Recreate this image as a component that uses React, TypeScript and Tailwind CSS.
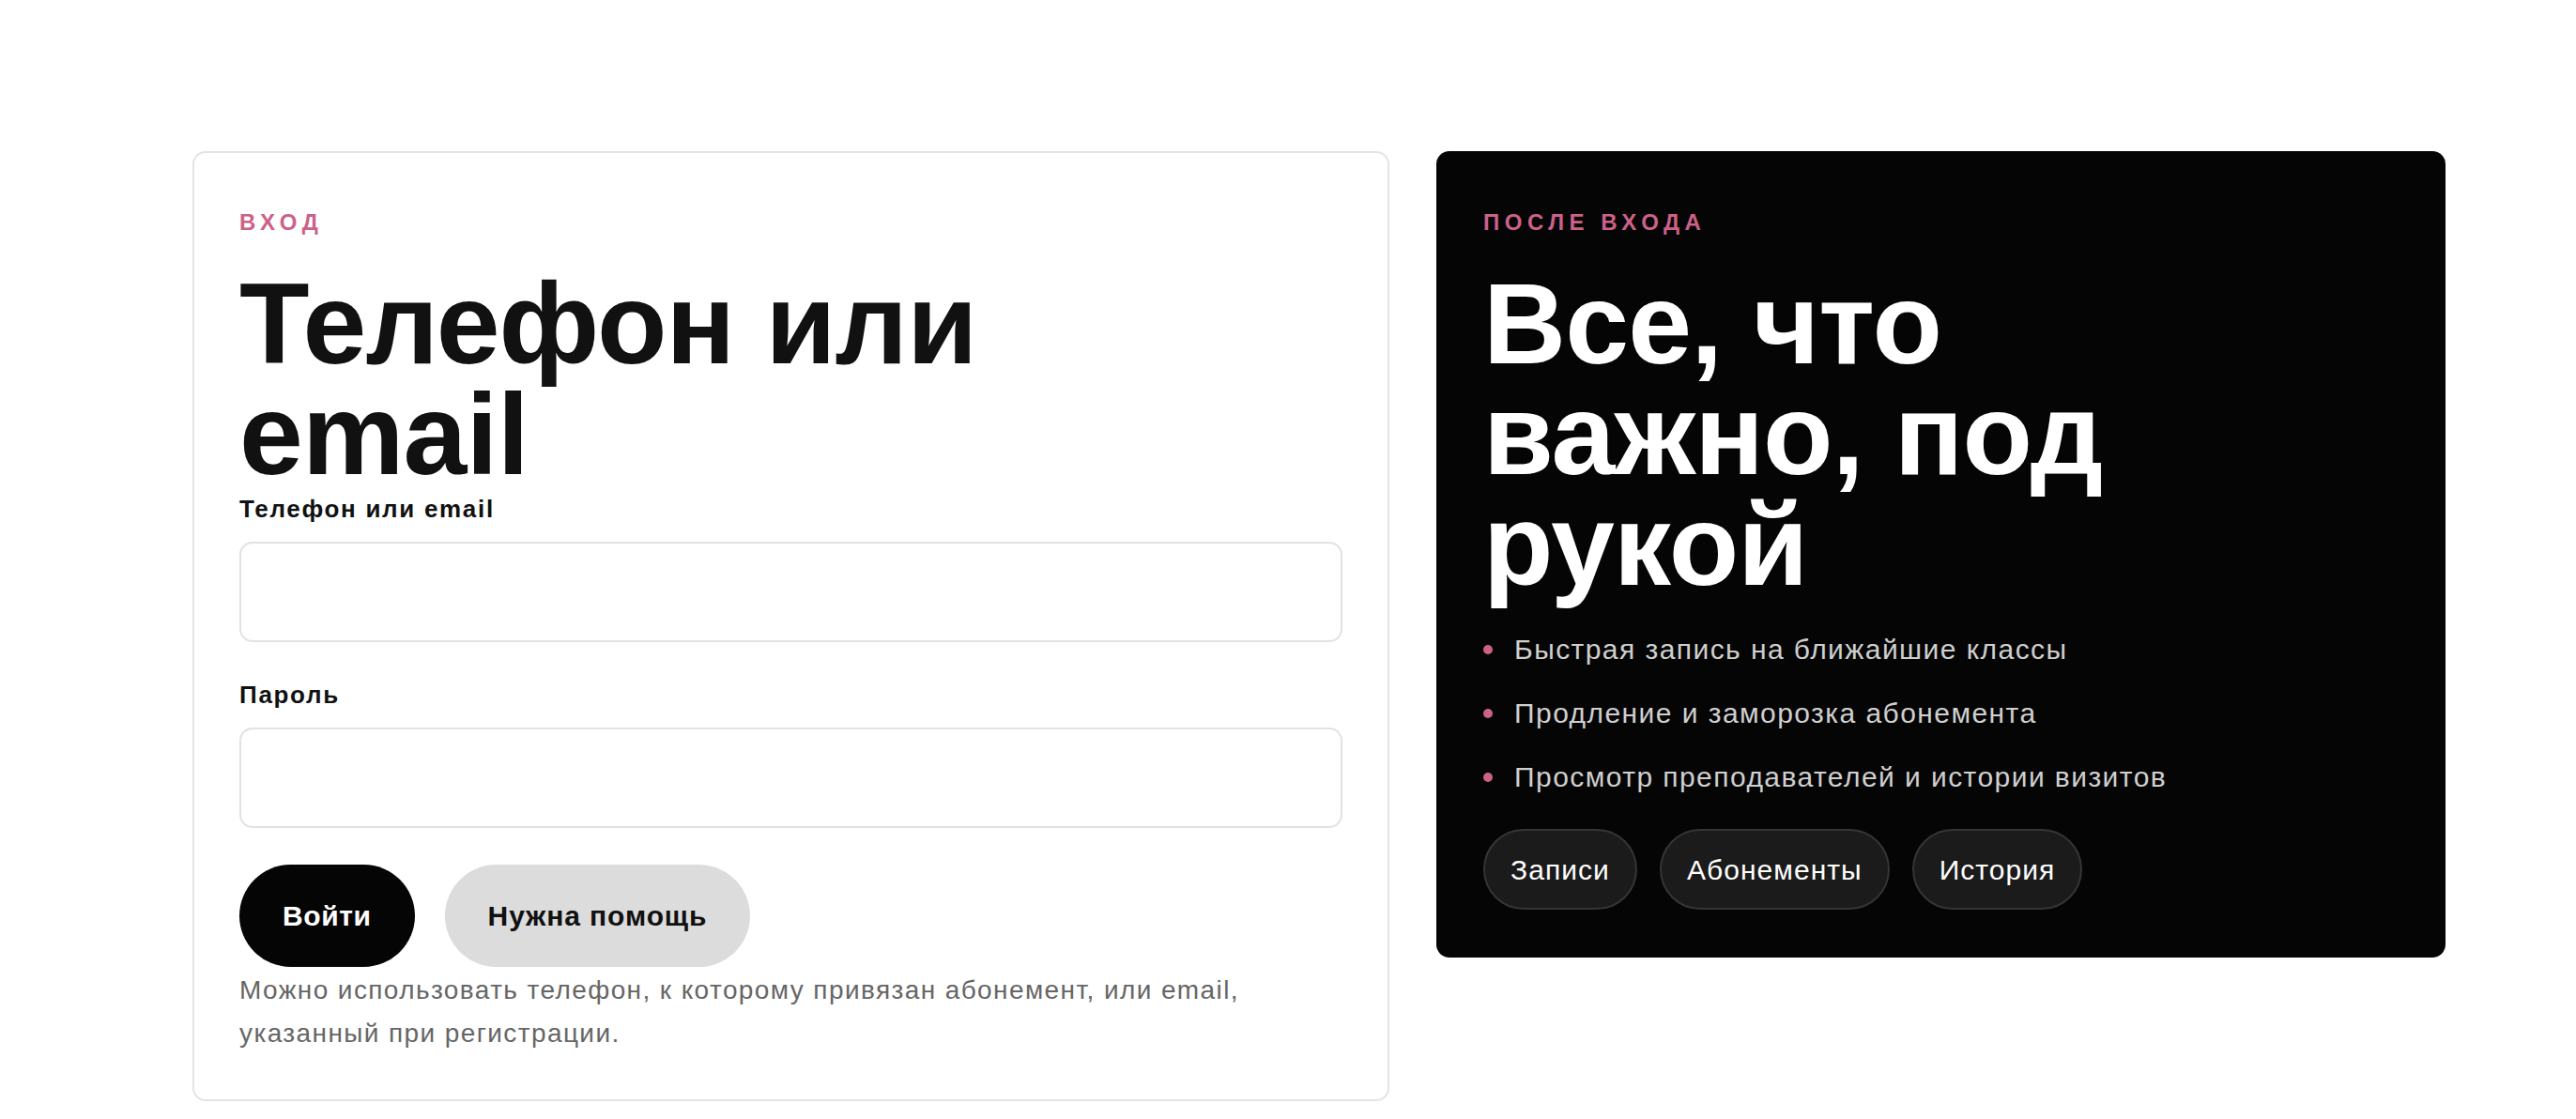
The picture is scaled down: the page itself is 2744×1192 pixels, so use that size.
import { type ReactNode } from "react";

const font = { fontFamily: '"Liberation Sans", Arial, sans-serif' };

function Eyebrow({ children }: { children: ReactNode }) {
  return (
    <div className="text-[24px] leading-[32px] font-bold tracking-[0.23em] uppercase text-[#cc6189]">
      {children}
    </div>
  );
}

function Field({ label, type }: { label: string; type: string }) {
  return (
    <label className="block">
      <span className="block text-[26px] leading-[36px] font-bold tracking-[0.065em] text-[#111]">
        {label}
      </span>
      <input
        type={type}
        className="mt-[17px] block h-[107px] w-full rounded-[14px] border-2 border-[#e2e2e2] bg-white px-6 text-[28px] outline-none"
      />
    </label>
  );
}

const perks = [
  "Быстрая запись на ближайшие классы",
  "Продление и заморозка абонемента",
  "Просмотр преподавателей и истории визитов",
];

const links = ["Записи", "Абонементы", "История"];

export default function App() {
  return (
    <div className="min-h-[1192px] bg-white" style={font}>
      <div className="grid grid-cols-[1275px_1075px] items-start gap-[50px] pl-[205px] pt-[161px]">
        {/* login form */}
        <section className="rounded-[14px] border-2 border-[#e4e4e4] bg-white px-[48px] pt-[58px] pb-[47px]">
          <Eyebrow>Вход</Eyebrow>
          <h1 className="mt-[33px] max-w-[860px] text-[122px] leading-[118px] font-bold tracking-[-0.007em] text-[#111]">
            Телефон или email
          </h1>
          <div className="mt-[2px]">
            <Field label="Телефон или email" type="text" />
          </div>
          <div className="mt-[38px]">
            <Field label="Пароль" type="password" />
          </div>
          <div className="mt-[39px] flex gap-[32px]">
            <button className="h-[109px] rounded-full bg-[#050505] px-[46px] text-[30px] font-bold tracking-[0.02em] text-white">
              Войти
            </button>
            <button className="h-[109px] rounded-full bg-[#dcdcdc] px-[46px] text-[30px] font-bold tracking-[0.03em] text-[#111]">
              Нужна помощь
            </button>
          </div>
          <p className="mt-[2px] text-[28px] leading-[46px] tracking-[0.05em] text-[#666]">
            Можно использовать телефон, к которому привязан абонемент, или email, указанный при
            регистрации.
          </p>
        </section>

        {/* what you get */}
        <section className="rounded-[14px] bg-[#050505] px-[50px] pt-[60px] pb-[51px]">
          <Eyebrow>После входа</Eyebrow>
          <h2 className="mt-[33px] max-w-[860px] text-[122px] leading-[118px] font-bold tracking-[-0.007em] text-white">
            Все, что важно, под рукой
          </h2>
          <ul className="mt-[29px] flex flex-col gap-[22px]">
            {perks.map((p) => (
              <li
                key={p}
                className="flex items-center gap-[23px] text-[30px] leading-[46px] tracking-[0.048em] text-[#cfcfcf]"
              >
                <span className="h-[10px] w-[10px] shrink-0 rounded-full bg-[#cc6189]" />
                {p}
              </li>
            ))}
          </ul>
          <div className="mt-[32px] flex gap-[24px]">
            {links.map((l) => (
              <button
                key={l}
                className="h-[86px] rounded-full border-2 border-[#353535] bg-[#1b1b1b] px-[27px] text-[30px] tracking-[0.035em] text-white"
              >
                {l}
              </button>
            ))}
          </div>
        </section>
      </div>
    </div>
  );
}
